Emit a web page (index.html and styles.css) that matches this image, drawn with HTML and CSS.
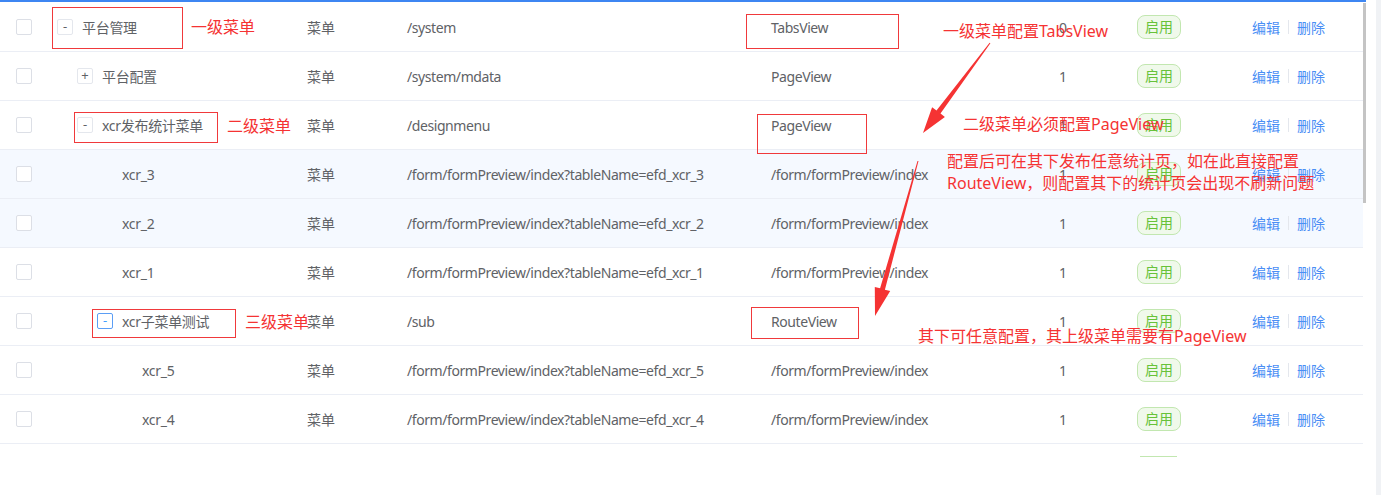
FILE: index.html
```html
<!DOCTYPE html>
<html lang="zh-CN">
<head>
<meta charset="utf-8">
<title>菜单管理</title>
<link rel="stylesheet" href="styles.css">
</head>
<body>
<div class="page">
  <div class="main">
    <div class="topbar"></div>
    <div class="body">
      <div class="table">
        <div class="row">
          <div class="c-check"><span class="checkbox"></span></div>
          <div class="c-name lv1"><span class="toggle">-</span><span>平台管理</span></div>
          <div class="c-type">菜单</div>
          <div class="c-path">/system</div>
          <div class="c-comp">TabsView</div>
          <div class="c-sort">0</div>
          <div class="c-status"><span class="tag">启用</span></div>
          <div class="c-act"><a class="link">编辑</a><span class="sep"></span><a class="link">删除</a></div>
        </div>
        <div class="row">
          <div class="c-check"><span class="checkbox"></span></div>
          <div class="c-name lv2"><span class="toggle">+</span><span>平台配置</span></div>
          <div class="c-type">菜单</div>
          <div class="c-path">/system/mdata</div>
          <div class="c-comp">PageView</div>
          <div class="c-sort">1</div>
          <div class="c-status"><span class="tag">启用</span></div>
          <div class="c-act"><a class="link">编辑</a><span class="sep"></span><a class="link">删除</a></div>
        </div>
        <div class="row">
          <div class="c-check"><span class="checkbox"></span></div>
          <div class="c-name lv2"><span class="toggle">-</span><span>xcr发布统计菜单</span></div>
          <div class="c-type">菜单</div>
          <div class="c-path">/designmenu</div>
          <div class="c-comp">PageView</div>
          <div class="c-sort">1</div>
          <div class="c-status"><span class="tag">启用</span></div>
          <div class="c-act"><a class="link">编辑</a><span class="sep"></span><a class="link">删除</a></div>
        </div>
        <div class="row hl">
          <div class="c-check"><span class="checkbox"></span></div>
          <div class="c-name lv3"><span class="toggle blank"></span><span>xcr_3</span></div>
          <div class="c-type">菜单</div>
          <div class="c-path">/form/formPreview/index?tableName=efd_xcr_3</div>
          <div class="c-comp">/form/formPreview/index</div>
          <div class="c-sort">1</div>
          <div class="c-status"><span class="tag">启用</span></div>
          <div class="c-act"><a class="link">编辑</a><span class="sep"></span><a class="link">删除</a></div>
        </div>
        <div class="row hl">
          <div class="c-check"><span class="checkbox"></span></div>
          <div class="c-name lv3"><span class="toggle blank"></span><span>xcr_2</span></div>
          <div class="c-type">菜单</div>
          <div class="c-path">/form/formPreview/index?tableName=efd_xcr_2</div>
          <div class="c-comp">/form/formPreview/index</div>
          <div class="c-sort">1</div>
          <div class="c-status"><span class="tag">启用</span></div>
          <div class="c-act"><a class="link">编辑</a><span class="sep"></span><a class="link">删除</a></div>
        </div>
        <div class="row">
          <div class="c-check"><span class="checkbox"></span></div>
          <div class="c-name lv3"><span class="toggle blank"></span><span>xcr_1</span></div>
          <div class="c-type">菜单</div>
          <div class="c-path">/form/formPreview/index?tableName=efd_xcr_1</div>
          <div class="c-comp">/form/formPreview/index</div>
          <div class="c-sort">1</div>
          <div class="c-status"><span class="tag">启用</span></div>
          <div class="c-act"><a class="link">编辑</a><span class="sep"></span><a class="link">删除</a></div>
        </div>
        <div class="row">
          <div class="c-check"><span class="checkbox"></span></div>
          <div class="c-name lv3"><span class="toggle active">-</span><span>xcr子菜单测试</span></div>
          <div class="c-type">菜单</div>
          <div class="c-path">/sub</div>
          <div class="c-comp">RouteView</div>
          <div class="c-sort">1</div>
          <div class="c-status"><span class="tag">启用</span></div>
          <div class="c-act"><a class="link">编辑</a><span class="sep"></span><a class="link">删除</a></div>
        </div>
        <div class="row">
          <div class="c-check"><span class="checkbox"></span></div>
          <div class="c-name lv4"><span class="toggle blank"></span><span>xcr_5</span></div>
          <div class="c-type">菜单</div>
          <div class="c-path">/form/formPreview/index?tableName=efd_xcr_5</div>
          <div class="c-comp">/form/formPreview/index</div>
          <div class="c-sort">1</div>
          <div class="c-status"><span class="tag">启用</span></div>
          <div class="c-act"><a class="link">编辑</a><span class="sep"></span><a class="link">删除</a></div>
        </div>
        <div class="row">
          <div class="c-check"><span class="checkbox"></span></div>
          <div class="c-name lv4"><span class="toggle blank"></span><span>xcr_4</span></div>
          <div class="c-type">菜单</div>
          <div class="c-path">/form/formPreview/index?tableName=efd_xcr_4</div>
          <div class="c-comp">/form/formPreview/index</div>
          <div class="c-sort">1</div>
          <div class="c-status"><span class="tag">启用</span></div>
          <div class="c-act"><a class="link">编辑</a><span class="sep"></span><a class="link">删除</a></div>
        </div>
        <div class="tail"></div>
      </div>
      <div class="scroll"><div class="thumb"></div></div>
    </div>
  </div>
  <div class="gap"></div>
  <div class="edge"></div>
</div>

<div class="notes">
  <div class="box b1"></div>
  <div class="box b2"></div>
  <div class="box b3"></div>
  <div class="box b4"></div>
  <div class="box b5"></div>
  <div class="box b6"></div>
  <div class="note n1">一级菜单</div>
  <div class="note n2">二级菜单</div>
  <div class="note n3">三级菜单</div>
  <div class="note n4">一级菜单配置TabsView</div>
  <div class="note n5">二级菜单必须配置PageView</div>
  <div class="note n6">配置后可在其下发布任意统计页，如在此直接配置<br>RouteView，则配置其下的统计页会出现不刷新问题</div>
  <div class="note n7">其下可任意配置，其上级菜单需要有PageView</div>
  <svg class="arrows" width="1381" height="495" viewBox="0 0 1381 495">
    <polygon fill="#f53333" points="990.4,43.3 940.5,113.6 944.9,116.9 923,133 932.1,107.3 936.5,110.6 989.6,42.7"/>
    <polygon fill="#f53333" points="918.5,161.1 884.9,289.7 890.2,291.1 875,316 874.8,286.9 880.1,288.3 917.5,160.9"/>
  </svg>
</div>
</body>
</html>
```
FILE: styles.css
```css
* { box-sizing: border-box; }
html, body { margin: 0; padding: 0; background: #fff; }
body {
  position: relative;
  width: 1381px;
  height: 495px;
  overflow: hidden;
  font-family: "Noto Sans", "Noto Sans CJK SC", sans-serif;
  font-size: 14px;
  color: #606266;
}
.page { display: flex; height: 495px; }
.main { width: 1366px; display: flex; flex-direction: column; }
.topbar { height: 2px; background: #3d86f2; }
.body { display: flex; flex: 1; padding-top: 1px; }
.table { width: 1363px; }
.scroll { width: 3px; }
.thumb { height: 200px; background: #c4c4c4; }
.gap { width: 10px; }
.edge { width: 5px; background: #f0f2f5; }

.row {
  display: grid;
  grid-template-columns: 48px 249px 100px 364px 252px 100px 129px 121px;
  height: 49px;
  border-bottom: 1px solid #ebeef5;
  align-items: center;
  white-space: nowrap;
}
.row.hl { background: #f5f9ff; }
.c-check { padding-left: 16px; display: flex; }
.checkbox {
  width: 16px; height: 16px;
  border: 1px solid #dcdfe6;
  border-radius: 2px;
  background: #fff;
}
.c-name { display: flex; align-items: center; letter-spacing: -0.3px; }
.lv1 { padding-left: 9px; }
.lv2 { padding-left: 29px; }
.lv3 { padding-left: 49px; }
.lv4 { padding-left: 69px; }
.toggle {
  width: 16px; height: 16px;
  margin-right: 9px;
  border: 1px solid #e4e7ed;
  border-radius: 2px;
  font-size: 13px;
  line-height: 13px;
  text-align: center;
  color: #606266;
  background: #fff;
  letter-spacing: 0;
}
.toggle.active { border-color: #5b9ef5; color: #409eff; }
.toggle.blank { border: 0; background: transparent; }
.c-type, .c-path, .c-comp { padding-left: 10px; }
.c-path, .c-comp { letter-spacing: -0.42px; }
.c-sort { text-align: center; }
.c-status { padding-left: 24px; display: flex; }
.tag {
  height: 24px;
  padding: 0 7px;
  border: 1px solid #c2e7b0;
  border-radius: 8px;
  background: #f0f9eb;
  color: #67c23a;
  font-size: 14px;
  line-height: 22px;
}
.c-act { padding-left: 10px; display: flex; align-items: center; }
.link { color: #4a8ef5; cursor: pointer; }
.sep { width: 1px; height: 14px; background: #e4e7ed; margin: 0 8px; }
.tail {
  width: 37px; height: 1px;
  margin: 12px 0 0 1140px;
  background: #c2e7b0;
}

.notes { position: absolute; left: 0; top: 0; width: 1381px; height: 495px; pointer-events: none; }
.box { position: absolute; border: 1px solid #f0393b; }
.b1 { left: 52px; top: 7px; width: 131px; height: 42px; }
.b2 { left: 74px; top: 112px; width: 144px; height: 31px; }
.b3 { left: 92px; top: 309px; width: 144px; height: 29px; }
.b4 { left: 746px; top: 14px; width: 153px; height: 35px; }
.b5 { left: 757px; top: 114px; width: 110px; height: 40px; }
.b6 { left: 751px; top: 307px; width: 108px; height: 32px; }
.note {
  position: absolute;
  font-family: "Noto Sans", "Noto Sans CJK SC", sans-serif;
  font-size: 16px;
  line-height: 22px;
  color: #f53333;
  white-space: nowrap;
}
.n1 { left: 191px; top: 16px; }
.n2 { left: 227px; top: 115px; }
.n3 { left: 245px; top: 311px; }
.n4 { left: 943px; top: 20px; }
.n5 { left: 963px; top: 113px; }
.n6 { left: 947px; top: 150px; }
.n7 { left: 918px; top: 325px; }
.arrows { position: absolute; left: 0; top: 0; }
```
